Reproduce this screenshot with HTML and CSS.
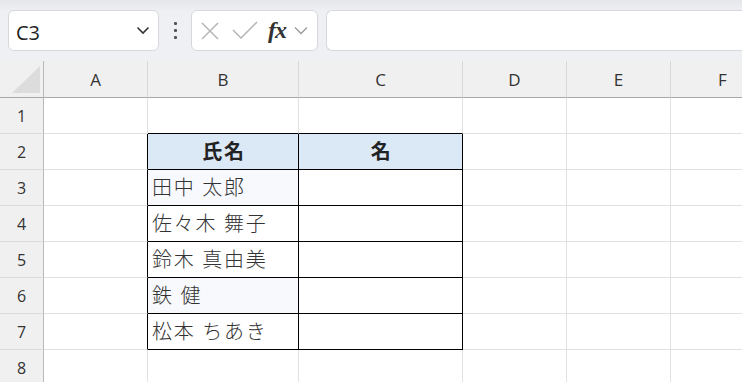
FILE: index.html
```html
<!doctype html>
<html lang="ja">
<head>
<meta charset="utf-8">
<title>Sheet</title>
<link rel="stylesheet" href="styles.css">
</head>
<body>
<div class="toolbar">
	<div class="namebox">
		<span class="ref">C3</span>
		<svg class="chev" width="14" height="9" viewBox="0 0 14 9"><path d="M1.5 1.5 L7 7 L12.5 1.5" fill="none" stroke="#333" stroke-width="1.6"/></svg>
	</div>
	<div class="dots"><i></i><i></i><i></i></div>
	<div class="fxbox">
		<svg width="20" height="20" viewBox="0 0 20 20"><path d="M2 2 L18 18 M18 2 L2 18" stroke="#b5b5b5" stroke-width="1.5" fill="none"/></svg>
		<svg width="26" height="20" viewBox="0 0 26 20"><path d="M1 9 L9 17 L25 1" stroke="#b5b5b5" stroke-width="1.5" fill="none"/></svg>
		<span class="fx">fx</span>
		<svg width="14" height="9" viewBox="0 0 14 9"><path d="M1 1.5 L7 7.5 L13 1.5" fill="none" stroke="#999" stroke-width="1.3"/></svg>
	</div>
	<div class="formula"></div>
</div>

<div class="sheet">
	<div class="hd corner"><span class="tri"></span></div>
	<div class="hd">A</div>
	<div class="hd">B</div>
	<div class="hd">C</div>
	<div class="hd">D</div>
	<div class="hd">E</div>
	<div class="hd">F</div>

	<div class="rh">1</div>
	<div class="c"></div><div class="c tb-top"></div><div class="c tb-top"></div><div class="c"></div><div class="c"></div><div class="c"></div>

	<div class="rh">2</div>
	<div class="c tb-left"></div><div class="c tb head">氏名</div><div class="c tb head">名</div><div class="c"></div><div class="c"></div><div class="c"></div>

	<div class="rh">3</div>
	<div class="c tb-left"></div><div class="c tb alt">田中 太郎</div><div class="c tb"></div><div class="c"></div><div class="c"></div><div class="c"></div>

	<div class="rh">4</div>
	<div class="c tb-left"></div><div class="c tb">佐々木 舞子</div><div class="c tb"></div><div class="c"></div><div class="c"></div><div class="c"></div>

	<div class="rh">5</div>
	<div class="c tb-left"></div><div class="c tb">鈴木 真由美</div><div class="c tb"></div><div class="c"></div><div class="c"></div><div class="c"></div>

	<div class="rh">6</div>
	<div class="c tb-left"></div><div class="c tb alt">鉄 健</div><div class="c tb"></div><div class="c"></div><div class="c"></div><div class="c"></div>

	<div class="rh">7</div>
	<div class="c tb-left"></div><div class="c tb">松本 ちあき</div><div class="c tb"></div><div class="c"></div><div class="c"></div><div class="c"></div>

	<div class="rh">8</div>
	<div class="c"></div><div class="c"></div><div class="c"></div><div class="c"></div><div class="c"></div><div class="c"></div>
</div>
</body>
</html>
```

FILE: styles.css
```css
body
{
	margin:0px;
	padding:0px;
	background:#fff;
	font-family:"Open Sans","Noto Sans CJK JP",sans-serif;
	overflow:hidden;
}
.toolbar
{
	height:61px;
	box-sizing:border-box;
	padding:10px 0 0 8px;
	display:flex;
	align-items:flex-start;
	background:linear-gradient(#e4e6e9 0px,#eceef1 9px,#eef0f3 12px);
}
.namebox
{
	width:151px;
	height:41px;
	box-sizing:border-box;
	border:1px solid #d6d8db;
	border-radius:6px;
	background:#fff;
	display:flex;
	align-items:center;
	justify-content:space-between;
	padding:0 8px 0 7px;
}
.ref
{
	font-size:20px;
	color:#222;
	padding-top:4px;
}
.dots
{
	width:32px;
	height:41px;
	display:flex;
	flex-direction:column;
	align-items:center;
	justify-content:center;
	gap:4px;
}
.dots i
{
	width:3px;
	height:3px;
	background:#555;
	border-radius:1px;
}
.fxbox
{
	width:127px;
	height:41px;
	box-sizing:border-box;
	border:1px solid #d6d8db;
	border-radius:6px;
	background:#fff;
	display:flex;
	align-items:center;
	padding:0 4px 0 8px;
	gap:8px;
}
.fxbox svg:first-child
{
	margin-right:4px;
}
.fx
{
	font-family:"Liberation Serif",serif;
	font-style:italic;
	font-weight:bold;
	font-size:24px;
	color:#333;
	margin-left:2px;
	letter-spacing:-1px;
}
.formula
{
	flex:1;
	height:41px;
	margin-left:8px;
	box-sizing:border-box;
	border:1px solid #d6d8db;
	border-right:none;
	border-radius:6px 0 0 6px;
	background:#fff;
}
.sheet
{
	display:grid;
	grid-template-columns:44px 104px 151px 164px 104px 104px 104px;
	grid-template-rows:37px repeat(8,36px);
}
.hd
{
	background:#f0f0f0;
	border-right:1px solid #d8d8d8;
	border-bottom:1px solid #a8a8a8;
	box-sizing:border-box;
	display:flex;
	align-items:center;
	justify-content:center;
	font-size:17px;
	color:#333;
}
.corner
{
	border-right:1px solid #b8b8b8;
	position:relative;
}
.tri
{
	position:absolute;
	left:12px;
	bottom:4px;
	width:0;
	height:0;
	border-left:28px solid transparent;
	border-bottom:27px solid #dcdcdc;
}
.rh
{
	background:#f0f0f0;
	border-right:1px solid #b8b8b8;
	border-bottom:1px solid #dcdcdc;
	box-sizing:border-box;
	display:flex;
	align-items:center;
	justify-content:center;
	font-size:16px;
	color:#333;
}
.c
{
	border-right:1px solid #e1e1e1;
	border-bottom:1px solid #e1e1e1;
	box-sizing:border-box;
	display:flex;
	align-items:center;
	padding:0 0 2px 4px;
	font-size:20px;
	font-weight:300;
	letter-spacing:1.7px;
	color:#333;
	white-space:nowrap;
}
.tb-top
{
	border-bottom-color:#000;
}
.tb-left
{
	border-right-color:#000;
}
.tb
{
	border-right-color:#000;
	border-bottom-color:#000;
}
.head
{
	background:#dbe8f6;
	justify-content:center;
	font-weight:bold;
	padding-left:2px;
	color:#222;
}
.alt
{
	background:#f7f9fc;
}
```
